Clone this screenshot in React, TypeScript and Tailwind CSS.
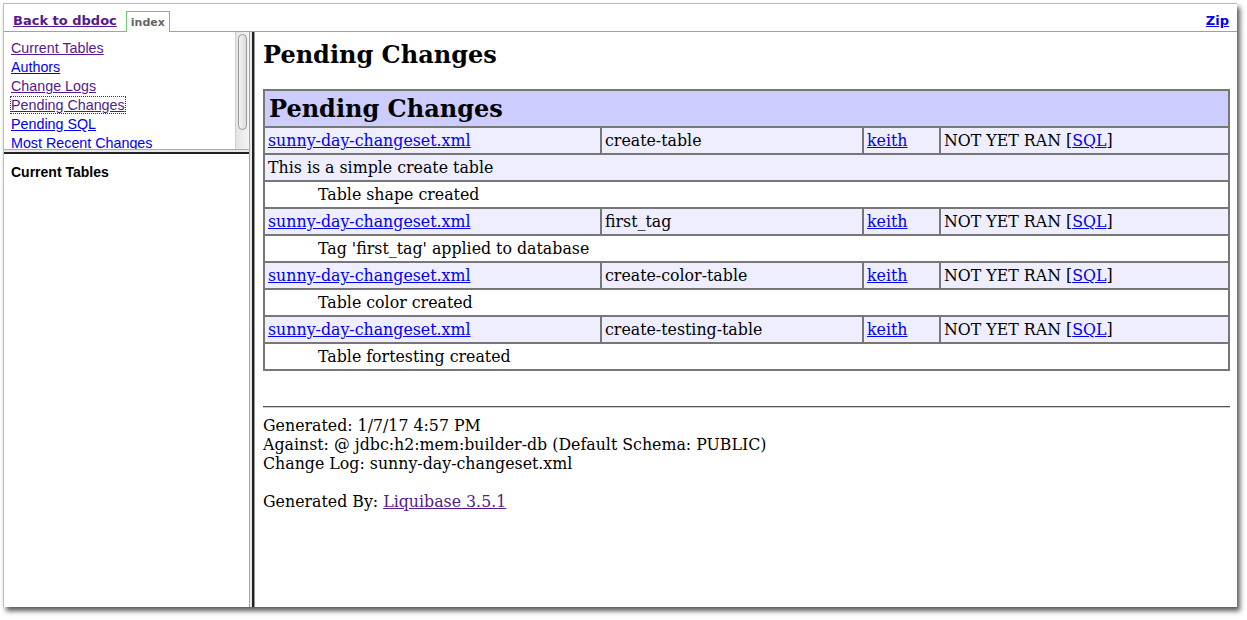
import React from 'react'

const serif = { fontFamily: '"DejaVu Serif", serif' }

type Change = {
  id: string
  author: string
  desc?: string
  detail: string
}

const changes: Change[] = [
  { id: 'create-table', author: 'keith', desc: 'This is a simple create table', detail: 'Table shape created' },
  { id: 'first_tag', author: 'keith', detail: "Tag 'first_tag' applied to database" },
  { id: 'create-color-table', author: 'keith', detail: 'Table color created' },
  { id: 'create-testing-table', author: 'keith', detail: 'Table fortesting created' },
]

const navLinks = [
  { label: 'Current Tables', visited: true },
  { label: 'Authors', visited: false },
  { label: 'Change Logs', visited: true },
  { label: 'Pending Changes', visited: true, focused: true },
  { label: 'Pending SQL', visited: false },
  { label: 'Most Recent Changes', visited: false },
]

const cell = 'border border-[#777] px-[3px] py-[3px] leading-[19px] align-middle'

const ChangeRows = ({ c }: { c: Change }) => (
  <>
    <tr className="bg-[#eeeeff]">
      <td className={cell}>
        <a className="text-[#0000ee] underline">sunny-day-changeset.xml</a>
      </td>
      <td className={cell}>{c.id}</td>
      <td className={cell}>
        <a className="text-[#0000ee] underline">{c.author}</a>
      </td>
      <td className={cell}>
        NOT YET RAN [<a className="text-[#0000ee] underline">SQL</a>]
      </td>
    </tr>
    {c.desc && (
      <tr className="bg-[#eeeeff]">
        <td colSpan={4} className={cell}>
          {c.desc}
        </td>
      </tr>
    )}
    <tr className="bg-white">
      <td colSpan={4} className={cell + ' pl-[53px]'}>
        {c.detail}
      </td>
    </tr>
  </>
)

export default function App() {
  return (
    <div className="w-[1247px] h-[620px] bg-white overflow-hidden pt-[3px] pl-[3px]">
      <div className="w-[1234px] h-[604px] bg-white border-l border-t border-[#bbb] shadow-[3px_4px_5px_rgba(0,0,0,0.65)] flex flex-col overflow-hidden">
        {/* top bar */}
        <div
          className="h-[28px] flex items-end border-b border-[#74c274] px-[9px] shrink-0"
          style={{ fontFamily: '"DejaVu Sans", sans-serif' }}
        >
          <a className="text-[13px] font-bold text-[#551a8b] underline mb-[1px] mr-[9px]">Back to dbdoc</a>
          <div className="h-[21px] px-[4px] border border-b-0 border-[#74c274] bg-white text-[11px] font-bold text-[#666] leading-[22px] -mb-px">
            index
          </div>
          <div className="flex-1" />
          <a className="text-[13px] font-bold text-[#0000ee] underline mb-[1px] mr-[-1px]">Zip</a>
        </div>

        <div className="flex flex-1 min-h-0">
          {/* left frames */}
          <div className="w-[245px] flex flex-col shrink-0">
            <div className="h-[117px] flex overflow-hidden">
              <div
                className="flex-1 pl-[7px] pt-[7px] text-[14.3px] leading-[19px] overflow-hidden"
                style={{ fontFamily: '"Liberation Sans", Arial, sans-serif' }}
              >
                {navLinks.map((l) => (
                  <div key={l.label}>
                    <a
                      className={
                        'underline ' +
                        (l.visited ? 'text-[#551a8b] ' : 'text-[#0000ee] ') +
                        (l.focused ? 'outline-1 outline-dotted outline-[#551a8b]' : '')
                      }
                    >
                      {l.label}
                    </a>
                  </div>
                ))}
              </div>
              <div className="w-[14px] bg-gradient-to-r from-[#e4e4e4] to-[#f4f4f4] border-l border-[#d0d0d0] pt-[2px] px-[2px]">
                <div className="h-[96px] rounded-full border border-[#999] bg-gradient-to-r from-[#f4f4f4] to-[#dcdcdc]" />
              </div>
            </div>
            <div className="h-[5px] flex flex-col shrink-0">
              <div className="h-px bg-[#aaa]" />
              <div className="h-[2px] bg-[#e8e8e8]" />
              <div className="h-[2px] bg-[#222]" />
            </div>
            <div
              className="flex-1 pl-[7px] pt-[8px] text-[14px] font-bold text-black"
              style={{ fontFamily: '"Liberation Sans", Arial, sans-serif' }}
            >
              Current Tables
            </div>
          </div>

          {/* vertical divider */}
          <div className="w-[6px] flex shrink-0">
            <div className="w-px bg-[#aaa]" />
            <div className="w-[2px] bg-[#e8e8e8]" />
            <div className="w-[2px] bg-[#222]" />
            <div className="w-px bg-[#999]" />
          </div>

          {/* main content */}
          <div className="flex-1 pl-[8px] pr-[7px] text-[15.8px] text-black" style={serif}>
            <h1 className="text-[24px] font-bold leading-[28px] mt-[9px] mb-[20px]">Pending Changes</h1>

            <table className="w-full border border-[#777] border-separate border-spacing-0 table-fixed">
              <colgroup>
                <col className="w-[337px]" />
                <col className="w-[262px]" />
                <col className="w-[77px]" />
                <col />
              </colgroup>
              <tbody>
                <tr className="bg-[#ccccff]">
                  <td colSpan={4} className="border border-[#777] px-[4px] pt-[4px] pb-[3px] text-[24px] font-bold leading-[28px]">
                    Pending Changes
                  </td>
                </tr>
                {changes.map((c) => (
                  <ChangeRows key={c.id} c={c} />
                ))}
              </tbody>
            </table>

            <div className="mt-[35px] h-[2px] border-t border-[#555] border-b border-b-[#ccc]" />
            <div className="pt-[8px] leading-[19px]">
              <div>Generated: 1/7/17 4:57 PM</div>
              <div>Against: @ jdbc:h2:mem:builder-db (Default Schema: PUBLIC)</div>
              <div>Change Log: sunny-day-changeset.xml</div>
              <div className="h-[19px]" />
              <div>
                Generated By: <a className="text-[#551a8b] underline">Liquibase 3.5.1</a>
              </div>
            </div>
          </div>
        </div>
      </div>
    </div>
  )
}
